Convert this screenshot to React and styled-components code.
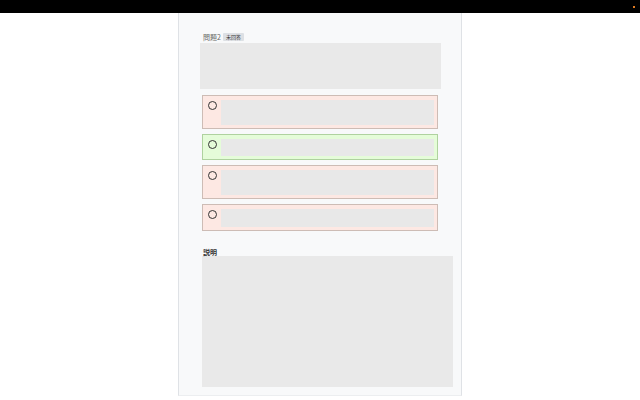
import React from "react";
import styled, { createGlobalStyle } from "styled-components";

const Global = createGlobalStyle`
  body {
    margin: 0;
    background: #fff;
    font-family: "Noto Sans CJK JP", "Noto Sans", sans-serif;
  }
`;

const TopBar = styled.div`
  height: 13px;
  background: #000;
  display: flex;
  justify-content: flex-end;
  align-items: center;
  padding-right: 5px;
`;

const Dot = styled.span`
  width: 2px;
  height: 2px;
  background: #e07a20;
`;

const Page = styled.div`
  display: flex;
  justify-content: center;
`;

const Panel = styled.div`
  width: 284px;
  min-height: 383px;
  background: #f8f9fa;
  border-left: 1px solid #dfe2e6;
  border-right: 1px solid #dfe2e6;
  border-bottom: 1px solid #eceef0;
  padding: 19px 0 0 0;
  box-sizing: border-box;
`;

const Header = styled.div`
  display: flex;
  align-items: center;
  gap: 2px;
  margin-left: 24px;
  height: 10px;
  margin-bottom: 1px;
`;

const Label = styled.span`
  font-size: 7px;
  line-height: 9px;
  color: #666;
`;

const Tag = styled.span`
  background: #dde0e4;
  color: #333;
  font-size: 5px;
  line-height: 8px;
  padding: 0 3px;
  border-radius: 1px;
`;

const QuestionBox = styled.div`
  margin-left: 21px;
  width: 241px;
  height: 46px;
  background: #e9e9e9;
`;

const Options = styled.div`
  display: flex;
  flex-direction: column;
  gap: 5px;
  margin: 6px 0 0 23px;
  width: 236px;
`;

const Option = styled.div`
  display: flex;
  box-sizing: border-box;
  height: ${(p) => p.h}px;
  padding: 4px 3px 3px 5px;
  background: ${(p) => (p.correct ? "#e5fcd9" : "#fde8e3")};
  border: 1px solid ${(p) => (p.correct ? "#afd29f" : "#cdbcb5")};
`;

const Radio = styled.span`
  flex: none;
  width: 7px;
  height: 7px;
  border: 1px solid #333;
  border-radius: 50%;
  background: transparent;
  margin-top: 1px;
`;

const OptionText = styled.div`
  flex: 1;
  margin-left: 4px;
  background: #e8e8e8;
`;

const ExplLabel = styled.div`
  margin: 18px 0 0 24px;
  font-size: 7px;
  line-height: 7px;
  color: #333;
  font-weight: bold;
`;

const ExplBox = styled.div`
  margin-left: 23px;
  width: 251px;
  height: 131px;
  background: #e9e9e9;
`;

const options = [
  { h: 34, correct: false },
  { h: 26, correct: true },
  { h: 34, correct: false },
  { h: 27, correct: false },
];

export default function App() {
  return (
    <>
      <Global />
      <TopBar>
        <Dot />
      </TopBar>
      <Page>
        <Panel>
          <Header>
            <Label>問題2</Label>
            <Tag>未回答</Tag>
          </Header>
          <QuestionBox />
          <Options>
            {options.map((o, i) => (
              <Option key={i} h={o.h} correct={o.correct}>
                <Radio />
                <OptionText />
              </Option>
            ))}
          </Options>
          <ExplLabel>説明</ExplLabel>
          <ExplBox />
        </Panel>
      </Page>
    </>
  );
}
